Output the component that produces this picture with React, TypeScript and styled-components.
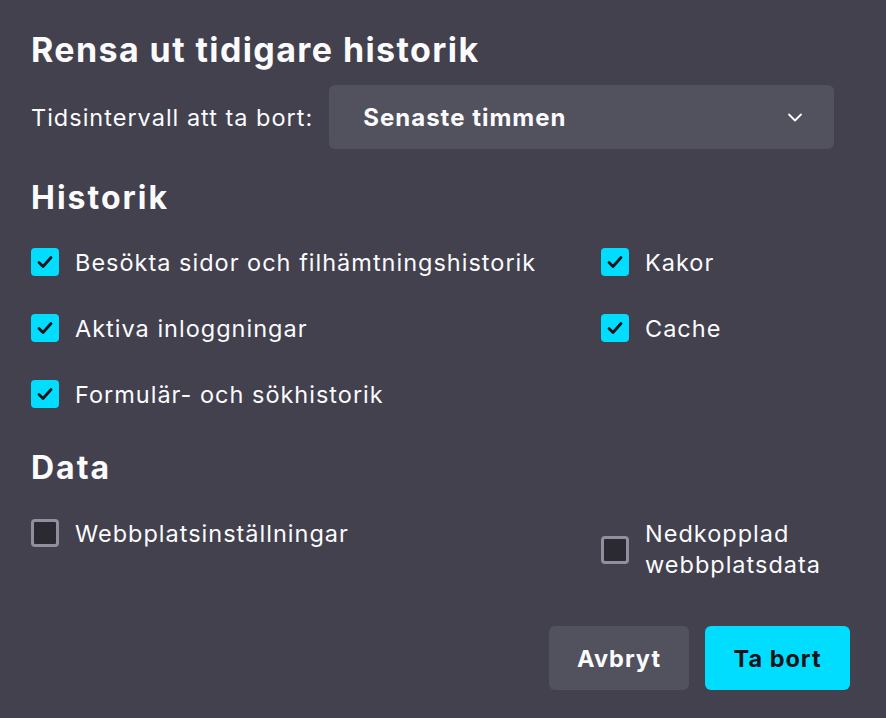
import React from "react";
import styled, { createGlobalStyle } from "styled-components";

const Global = createGlobalStyle`
  html, body { margin: 0; background: #42414d; }
  body { font-family: Inter, "Noto Sans", sans-serif; color: #fbfbfe; }
`;

const Dialog = styled.div`
  width: 886px; height: 718px; box-sizing: border-box;
  padding: 28px 36px 0 31px; display: flex; flex-direction: column;
`;
const Title = styled.h1`
  margin: 0; font-size: 34px; font-weight: 700; line-height: 44px; letter-spacing: 1.4px;
`;
const RangeRow = styled.div`
  display: flex; align-items: center; gap: 16px; margin-top: 13px;
`;
const Label = styled.span`font-size: 23.5px; letter-spacing: 1px;`;
const Select = styled.div`
  width: 505px; height: 64px; box-sizing: border-box; background: #52515e; border-radius: 6px;
  display: flex; align-items: center; justify-content: space-between; padding: 0 30px 0 34px;
  font-size: 24px; font-weight: 700; letter-spacing: 1px;
`;
const Heading = styled.h2<{ $top: number }>`
  margin: ${p => p.$top}px 0 0; font-size: 32px; font-weight: 700; line-height: 40px; letter-spacing: 2px;
`;
const Grid = styled.div<{ $top: number }>`
  display: grid; grid-template-columns: 570px 1fr; row-gap: 35px; margin-top: ${p => p.$top}px;
`;
const Item = styled.label<{ $center?: boolean }>`
  display: flex; align-items: ${p => p.$center ? "center" : "flex-start"}; gap: 16px;
  font-size: 23.5px; line-height: 31px; letter-spacing: 1px;
`;
const Box = styled.span<{ $on?: boolean }>`
  width: 28px; height: 28px; box-sizing: border-box; border-radius: 4px; flex: none;
  display: flex; align-items: center; justify-content: center; margin-top: 1px;
  background: ${p => p.$on ? "#00ddff" : "#2b2a33"};
  border: ${p => p.$on ? "none" : "3px solid #8f8f9d"};
`;
const Footer = styled.div`
  display: flex; justify-content: flex-end; gap: 16px; margin-top: auto; margin-bottom: 28px;
`;
const Button = styled.button<{ $primary?: boolean }>`
  height: 64px; border: none; border-radius: 6px; padding: 0 24px;
  font-family: inherit; font-size: 23.5px; font-weight: 700; letter-spacing: 1px;
  background: ${p => p.$primary ? "#00ddff" : "#52515e"};
  color: ${p => p.$primary ? "#15141a" : "#fbfbfe"};
  min-width: ${p => p.$primary ? 145 : 140}px;
`;

const Check = ({ on }: { on?: boolean }) => (
  <Box $on={on}>
    {on && (
      <svg width="18" height="18" viewBox="0 0 18 18">
        <path d="M3 9.5l4 4 8-9" fill="none" stroke="#15141a" strokeWidth="2.8" strokeLinecap="round" strokeLinejoin="round" />
      </svg>
    )}
  </Box>
);

export default function App() {
  return (
    <Dialog>
      <Global />
      <Title>Rensa ut tidigare historik</Title>
      <RangeRow>
        <Label>Tidsintervall att ta bort:</Label>
        <Select>
          <span>Senaste timmen</span>
          <svg width="18" height="18" viewBox="0 0 18 18">
            <path d="M3 6.5l6 6 6-6" fill="none" stroke="#fbfbfe" strokeWidth="1.8" strokeLinecap="round" strokeLinejoin="round" />
          </svg>
        </Select>
      </RangeRow>
      <Heading $top={29}>Historik</Heading>
      <Grid $top={29}>
        <Item><Check on />Besökta sidor och filhämtningshistorik</Item>
        <Item><Check on />Kakor</Item>
        <Item><Check on />Aktiva inloggningar</Item>
        <Item><Check on />Cache</Item>
        <Item><Check on />Formulär- och sökhistorik</Item>
      </Grid>
      <Heading $top={38}>Data</Heading>
      <Grid $top={30}>
        <Item><Check />Webbplatsinställningar</Item>
        <Item $center><Check /><span>Nedkopplad<br />webbplatsdata</span></Item>
      </Grid>
      <Footer>
        <Button>Avbryt</Button>
        <Button $primary>Ta bort</Button>
      </Footer>
    </Dialog>
  );
}
